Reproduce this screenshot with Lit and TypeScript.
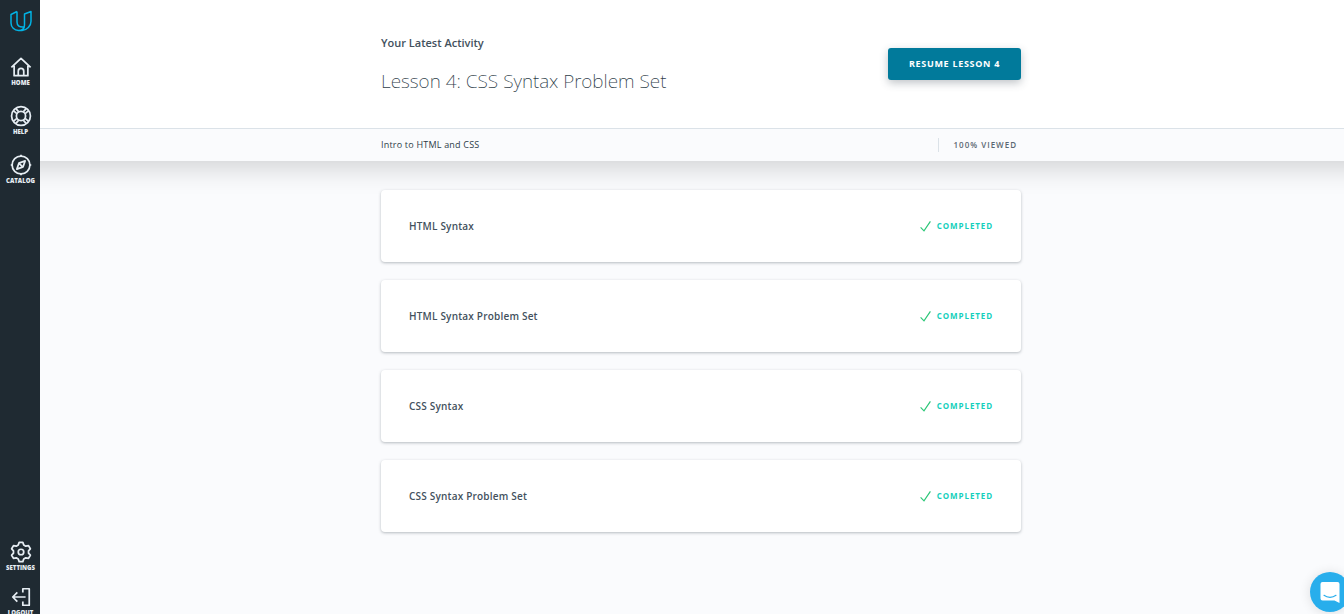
import { LitElement, html, css, svg } from "lit";
import { customElement, property } from "lit/decorators.js";

const icons: Record<string, unknown> = {
  home: svg`<path d="M1.500 12.500 12 2.500l10.500 10M4.500 10.500v11h15v-11M9 21.500v-5a3 3 0 0 1 6 0v5"/>`,
  help: svg`<circle cx="12" cy="12" r="10.300"/><circle cx="12" cy="12" r="5"/><path d="M4 6.500 7.500 9.500M6.500 4 9.500 7.500M20 6.500 16.500 9.500M17.500 4 14.500 7.500M4 17.500 7.500 14.500M6.500 20 9.500 16.500M20 17.500 16.500 14.500M17.500 20 14.500 16.500"/>`,
  catalog: svg`<circle cx="12" cy="12" r="9.700"/><path d="M16.500 7.500 14.300 14 7.500 16.500 9.700 10Z M10.500 10.800l2.700 2.700"/><path d="M12 .8v2M12 21.200v2M.8 12h2M21.200 12h2"/>`,
  settings: svg`<path d="M9 4.300 10 1.500h4l1 2.800 2.200 1.300 3-.6 2 3.500-2 2.200v2.600l2 2.200-2 3.500-3-.6-2.200 1.300-1 2.800h-4l-1-2.800-2.200-1.300-3 .6-2-3.500 2-2.200v-2.600l-2-2.200 2-3.500 3 .6Z"/><circle cx="12" cy="12" r="3"/>`,
  logout: svg`<path d="M14 7V3h7v18h-7v-4M17 12H3M8 7l-5 5 5 5"/>`,
};

@customElement("nav-item")
class NavItem extends LitElement {
  @property() icon = "";
  @property() label = "";

  static styles = css`
    :host { display: block; }
    .link {
      display: flex;
      flex-direction: column;
      align-items: center;
      gap: 1px;
      color: #e6edf3;
      text-decoration: none;
      font-weight: 800;
      font-size: 6px;
      line-height: 8px;
      white-space: nowrap;
    }
    .icon {
      width: 22px;
      height: 22px;
      fill: none;
      stroke: currentColor;
      stroke-width: 1.9;
      stroke-linejoin: round;
    }
  `;

  render() {
    return html`<a class="link" href="#">
      <svg class="icon" viewBox="0 0 24 24" aria-hidden="true">${icons[this.icon]}</svg>
      <span>${this.label}</span>
    </a>`;
  }
}

@customElement("lesson-card")
class LessonCard extends LitElement {
  @property() name = "";

  static styles = css`
    :host { display: block; }
    .card {
      display: flex;
      align-items: center;
      justify-content: space-between;
      box-sizing: border-box;
      min-height: 72px;
      padding: 0 28px;
      border-radius: 4px;
      background: #fff;
      box-shadow: 0 1px 3px rgba(46, 61, 73, 0.34);
      color: #43515d;
      text-decoration: none;
      font-size: 10px;
      font-weight: 600;
      line-height: 16px;
      letter-spacing: 0.2px;
    }
    .status {
      display: flex;
      align-items: center;
      gap: 6px;
      color: #15cfbc;
      font-size: 8px;
      font-weight: 700;
      letter-spacing: 0.9px;
    }
    .check {
      width: 11px;
      height: 12px;
      fill: none;
      stroke: #2cc777;
      stroke-width: 1.2;
    }
  `;

  render() {
    return html`<a class="card" href="#">
      <span>${this.name}</span>
      <span class="status">
        <svg class="check" viewBox="0 0 11 12" aria-hidden="true"><path d="M.6 7.4 4 10.8 10.4 1.4"/></svg>
        COMPLETED
      </span>
    </a>`;
  }
}

@customElement("app-root")
class AppRoot extends LitElement {
  private lessons = ["HTML Syntax", "HTML Syntax Problem Set", "CSS Syntax", "CSS Syntax Problem Set"];

  static styles = css`
    :host {
      display: flex;
      height: 100vh;
      overflow: hidden;
      background: #fafbfd;
      color: #2e3d49;
      font-family: "Open Sans", "Noto Sans", sans-serif;
    }
    .sidebar {
      display: flex;
      flex-direction: column;
      flex: 0 0 40px;
      box-sizing: border-box;
      padding-left: 1px;
      background: #1f2a32;
    }
    .brand {
      display: flex;
      justify-content: center;
      padding: 10px 0 24px;
    }
    .logo {
      width: 24px;
      height: 22px;
      fill: none;
      stroke: #02b3e4;
      stroke-width: 1.5;
      stroke-linejoin: round;
    }
    .group {
      display: flex;
      flex-direction: column;
      gap: 18px;
    }
    .bottom {
      margin-top: auto;
      margin-bottom: -3px;
      gap: 14px;
    }
    .main {
      flex: 1;
      min-width: 0;
      overflow: hidden;
    }
    .top {
      position: relative;
      z-index: 1;
      background: #fff;
      border-bottom: 1px solid #dbe2e8;
    }
    .row {
      display: flex;
      justify-content: space-between;
      box-sizing: border-box;
      width: 100%;
      max-width: 658px;
      margin: 0 auto;
      padding-left: 18px;
    }
    .hero {
      align-items: flex-start;
      padding-top: 35px;
      padding-bottom: 32px;
    }
    .eyebrow {
      margin: 0;
      color: #43515d;
      font-size: 11px;
      font-weight: 600;
      line-height: 16px;
    }
    .title {
      margin: 15px 0 0;
      font-family: "Noto Sans", "Open Sans", sans-serif;
      font-size: 19px;
      font-weight: 200;
      line-height: 30px;
    }
    .resume {
      margin-top: 13px;
      padding: 0 21px;
      height: 32px;
      border: 0;
      border-radius: 3px;
      background: #017a9b;
      box-shadow: 0 3px 8px rgba(46, 61, 73, 0.3);
      color: #fff;
      font: 700 9px/16px "Open Sans", "Noto Sans", sans-serif;
      letter-spacing: 0.7px;
      white-space: nowrap;
    }
    .course {
      margin: 0 -40px;
      padding: 0 40px;
      background: #fafbfd;
      box-shadow: 0 4px 30px rgba(0, 0, 0, 0.2);
    }
    .crumbs {
      align-items: center;
      min-height: 32px;
      font-size: 9px;
      line-height: 14px;
    }
    .course-name {
      letter-spacing: 0.2px;
    }
    .viewed {
      padding: 0 4px 0 15px;
      border-left: 1px solid #dbe2e8;
      color: #5a6772;
      font-size: 8px;
      font-weight: 600;
      letter-spacing: 1px;
    }
    .list {
      flex-direction: column;
      gap: 18px;
      padding-top: 29px;
    }
    .chat {
      position: fixed;
      right: -6px;
      bottom: 2px;
      display: grid;
      place-items: center;
      width: 40px;
      height: 40px;
      padding: 0;
      border: 0;
      border-radius: 50%;
      background: #28aeec;
      box-shadow: 0 1px 12px rgba(0, 0, 0, 0.12);
    }
    .bubble {
      width: 20px;
      height: 21px;
    }
  `;

  render() {
    return html`
      <nav class="sidebar" aria-label="Main">
        <a class="brand" href="#" aria-label="Udacity">
          <svg class="logo" viewBox="0 0 24 22" aria-hidden="true">
            <path d="M8 1.500 2 4.500v8.500a7.500 7.500 0 0 0 7.500 7.500c3.500 0 6-2 6-5.500V4l6.500-2.500v9.700c0 5-4 8.800-9 9.300H9.500M8 1.500v10.500c0 4 2.500 5.500 7 5"/>
          </svg>
        </a>
        <div class="group">
          <nav-item icon="home" label="HOME"></nav-item>
          <nav-item icon="help" label="HELP"></nav-item>
          <nav-item icon="catalog" label="CATALOG"></nav-item>
        </div>
        <div class="group bottom">
          <nav-item icon="settings" label="SETTINGS"></nav-item>
          <nav-item icon="logout" label="LOGOUT"></nav-item>
        </div>
      </nav>
      <main class="main">
        <header class="top">
          <div class="row hero">
            <div>
              <p class="eyebrow">Your Latest Activity</p>
              <h1 class="title">Lesson 4: CSS Syntax Problem Set</h1>
            </div>
            <button class="resume" type="button">RESUME LESSON 4</button>
          </div>
        </header>
        <div class="course">
          <div class="row crumbs">
            <span class="course-name">Intro to HTML and CSS</span>
            <span class="viewed">100% VIEWED</span>
          </div>
        </div>
        <section class="row list" aria-label="Lessons">
          ${this.lessons.map((name) => html`<lesson-card .name=${name}></lesson-card>`)}
        </section>
      </main>
      <button class="chat" type="button" aria-label="Open chat">
        <svg class="bubble" viewBox="0 0 20 21" aria-hidden="true">
          <path d="M2.500 0h15A2 2 0 0 1 19.500 2v19L14.500 18.500h-12A2 2 0 0 1 .500 16.500V2A2 2 0 0 1 2.500 0Z" fill="#fff"/>
          <path d="M4 13.300c3.500 2.700 8.500 2.700 12 0" fill="none" stroke="#28aeec" stroke-width="1.200" stroke-linecap="round"/>
        </svg>
      </button>
    `;
  }
}
